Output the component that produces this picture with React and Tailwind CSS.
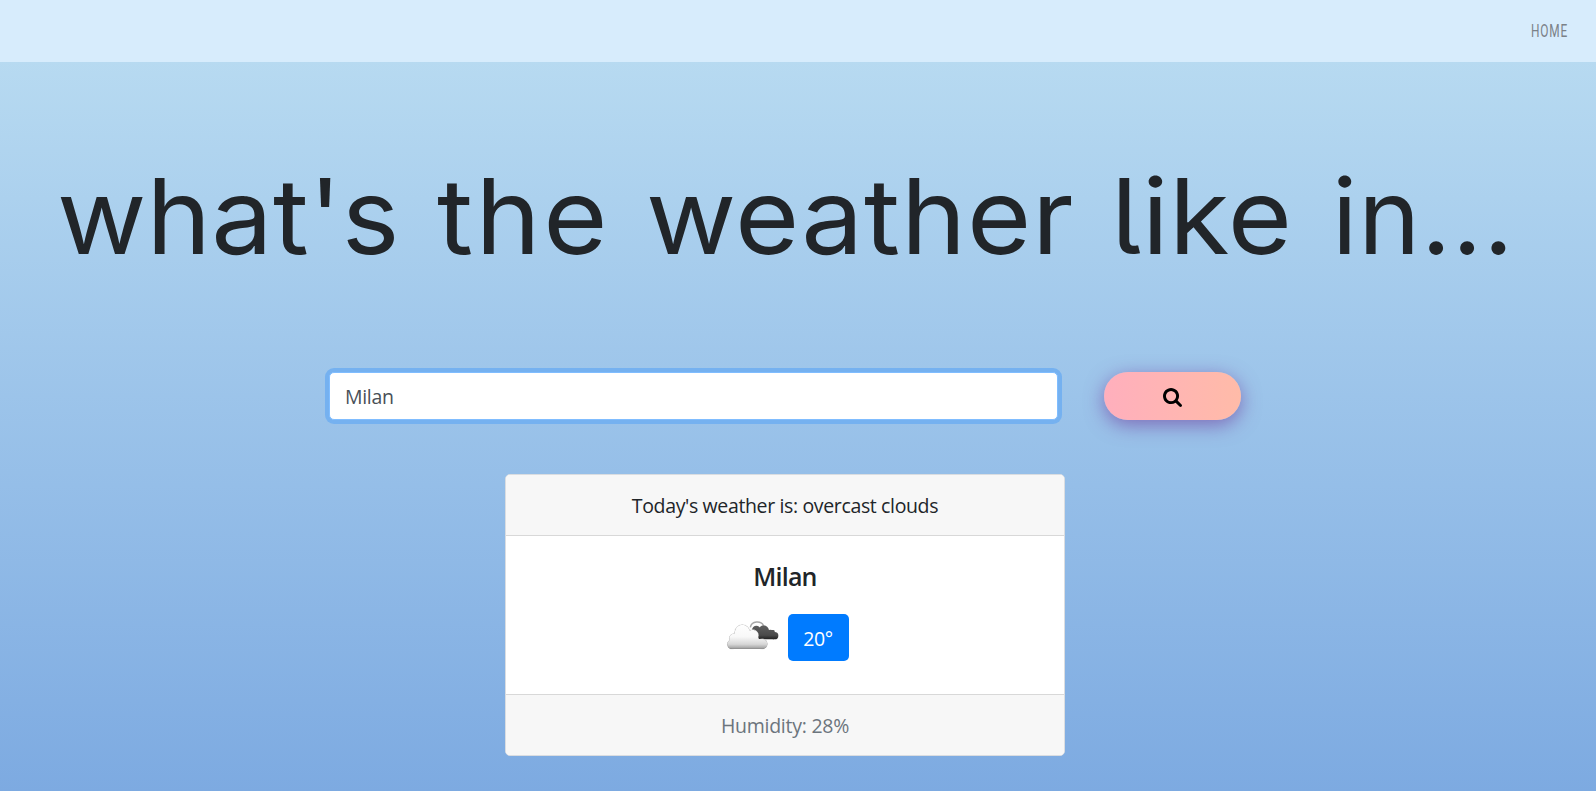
const SEARCH_PATH =
  "M1152 704q0-185-131.5-316.5t-316.5-131.5-316.5 131.5-131.5 316.5 131.5 316.5 316.5 131.5 316.5-131.5 131.5-316.5zm512 832q0 52-38 90t-90 38q-54 0-90-38l-343-342q-179 124-399 124-143 0-273.5-55.5t-225-150-150-225-55.5-273.5 55.5-273.5 150-225 225-150 273.5-55.5 273.5 55.5 225 150 150 225 55.5 273.5q0 220-124 399l343 343q37 37 37 90z";

function CloudIcon() {
  return (
    <svg width="54" height="30" viewBox="33 30 162 90" className="shrink-0">
      <defs>
        <linearGradient id="front" gradientUnits="userSpaceOnUse" x1="0" y1="43" x2="0" y2="118">
          <stop offset="0" stopColor="#ffffff" />
          <stop offset="0.5" stopColor="#f8f8f8" />
          <stop offset="0.8" stopColor="#d6d6d6" />
          <stop offset="0.92" stopColor="#b0b0b0" />
          <stop offset="1" stopColor="#808080" />
        </linearGradient>
        <linearGradient id="back" gradientUnits="userSpaceOnUse" x1="0" y1="45" x2="0" y2="89">
          <stop offset="0" stopColor="#606060" />
          <stop offset="0.7" stopColor="#4a4a4a" />
          <stop offset="1" stopColor="#1c1c1c" />
        </linearGradient>
      </defs>
      <path d="M106 52C110 32 138 32 145 46" fill="none" stroke="#a8a8a8" strokeWidth="4.500" />
      <g fill="url(#back)">
        <circle cx="124" cy="60" r="13" />
        <circle cx="146" cy="62" r="16" />
        <circle cx="166" cy="69" r="10" />
        <circle cx="179" cy="77" r="11" />
        <rect x="126" y="60" width="53" height="28" rx="4" />
      </g>
      <g stroke="#e2e2e2" strokeWidth="2">
        <circle cx="51" cy="103" r="14" />
        <circle cx="57" cy="85" r="14" />
        <circle cx="82" cy="67" r="23" />
        <circle cx="113" cy="76" r="17" />
        <circle cx="142" cy="102" r="15" />
      </g>
      <g fill="url(#front)">
        <circle cx="51" cy="103" r="14" />
        <circle cx="57" cy="85" r="14" />
        <circle cx="82" cy="67" r="23" />
        <circle cx="113" cy="76" r="17" />
        <circle cx="142" cy="102" r="15" />
        <path d="M51 117V80H82L127 77 132 87 142 88V117Z" />
      </g>
    </svg>
  );
}

export default function App() {
  return (
    <div className="flex h-[791px] w-full flex-col overflow-hidden bg-linear-to-b from-[#bcdef2] to-[#7daae1] font-['Open_Sans','Noto_Sans',sans-serif] text-[19.5px] leading-[30px] tracking-[-0.36px] text-[#212529]">
      <nav className="flex h-[62px] shrink-0 items-center justify-end bg-[#d7ecfc] pr-7">
        <a className="w-[37px] font-['Roboto',sans-serif] text-[18px] font-normal tracking-[1.3px] text-[#7b8187]">
          <span className="inline-block origin-left scale-x-[0.66]">HOME</span>
        </a>
      </nav>

      <h1 className="mt-[90px] flex h-[127px] shrink-0 pl-[57px] font-['Inter',sans-serif] text-[105px] leading-[127px] whitespace-nowrap [font-feature-settings:'cv05','ss03']">
        <span className="w-[380px] origin-left scale-x-[1.04] tracking-[0.2px]">what's</span>
        <span className="w-[209px] origin-left scale-x-[1.05] tracking-[2.4px]">the</span>
        <span className="w-[465px] origin-left scale-x-[1.05] tracking-[0.8px]">weather</span>
        <span className="w-[221px] origin-left scale-x-[1.05] tracking-[0.5px]">like</span>
        <span className="tracking-[0.8px]">in...</span>
      </h1>

      <form className="mt-[93px] flex h-12 shrink-0 pl-[329px]">
        <input
          defaultValue="Milan"
          className="h-12 w-[729px] rounded-[5px] border border-[#80bdff] bg-white px-[15px] tracking-[-0.3px] text-[#495057] shadow-[0_0_0_4px_#75b1f0] outline-none"
        />
        <button
          type="button"
          className="ml-[46px] flex h-12 w-[137px] items-center justify-center rounded-full bg-linear-to-r from-[#ffafbd] to-[#ffbba8] shadow-[0_5px_19px_rgba(116,79,168,0.75)]"
        >
          <svg viewBox="0 0 1664 1664" className="mt-0.5 size-[19px] fill-black">
            <path d={SEARCH_PATH} />
          </svg>
        </button>
      </form>

      <section className="mt-[54px] ml-[505px] flex h-[282px] w-[560px] shrink-0 flex-col overflow-hidden rounded-[5px] border border-[#dadde1] bg-white text-center">
        <header className="h-[61px] border-b border-[#d8d8d8] bg-[#f7f7f7] pt-4">Today's weather is: overcast clouds</header>
        <div className="flex flex-1 flex-col items-center pt-[25px]">
          <h5 className="text-[25px] leading-[30px] font-semibold tracking-[-0.8px]">Milan</h5>
          <div className="mt-[23px] flex pl-1">
            <div className="mt-1.5 mr-2"><CloudIcon /></div>
            <span className="h-[47px] w-[61px] rounded-[5px] bg-[#007bff] pt-[10px] text-white">20°</span>
          </div>
        </div>
        <footer className="h-[61px] border-t border-[#d8d8d8] bg-[#f7f7f7] pt-4 tracking-[-0.25px] text-[#6c757d]">Humidity: 28%</footer>
      </section>
    </div>
  );
}
